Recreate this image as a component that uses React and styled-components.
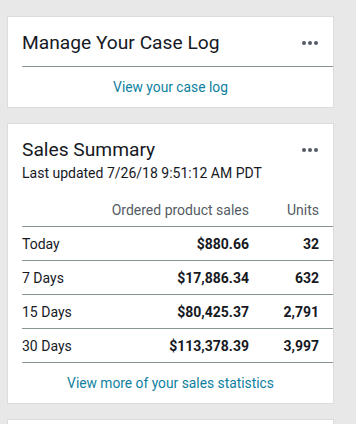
import React from 'react'
import styled, { createGlobalStyle } from 'styled-components'

const GlobalStyle = createGlobalStyle`
  body {
    margin: 0;
    background: #e8e8e8;
    font-family: Roboto, "Open Sans", sans-serif;
    color: #16191f;
  }
`

const Page = styled.div`
  width: 356px;
  height: 424px;
  overflow: hidden;
  padding: 16px 0 0 7px;
  box-sizing: border-box;
  display: flex;
  flex-direction: column;
  gap: 15px;
`

const Card = styled.div`
  width: 327px;
  box-sizing: border-box;
  background: #fff;
  border: 1px solid #dcdcdc;
  padding-left: 14px;
  min-height: ${({ minHeight }) => minHeight || 'auto'};
`

const Header = styled.div`
  display: flex;
  align-items: center;
  justify-content: space-between;
  padding: ${({ pad }) => pad};
  padding-right: 15px;
`

const Title = styled.h2`
  margin: 0;
  font-size: 19.2px;
  line-height: 24px;
  font-weight: 400;
  color: #16191f;
`

const Dots = styled.svg`
  width: 16px;
  height: 4px;
  fill: #545b64;
`

const Sub = styled.div`
  font-size: 14px;
  line-height: 18px;
  color: #16191f;
  margin-top: 2px;
`

const Divider = styled.div`
  border-top: 1px solid #879596;
`

const Footer = styled.div`
  display: flex;
  justify-content: center;
  align-items: center;
  height: 40px;
  padding-right: 14px;
`

const Link = styled.a`
  font-size: 13.8px;
  color: #0f7fa0;
  text-decoration: none;
  cursor: pointer;
`

const Table = styled.div`
  display: grid;
  grid-template-columns: 1fr auto 84px;
  margin-top: 11px;
`

const Cell = styled.div`
  height: 33px;
  display: flex;
  align-items: center;
  justify-content: ${({ left }) => (left ? 'flex-start' : 'flex-end')};
  padding-right: ${({ last }) => (last ? '14px' : '0')};
  font-size: 14px;
  font-weight: ${({ bold }) => (bold ? 700 : 400)};
  color: ${({ head }) => (head ? '#545b64' : '#16191f')};
  border-bottom: 1px solid #879596;
`

const DotsIcon = () => (
  <Dots viewBox="0 0 16 4">
    <circle cx="2" cy="2" r="2" />
    <circle cx="8" cy="2" r="2" />
    <circle cx="14" cy="2" r="2" />
  </Dots>
)

const rows = [
  ['Today', '$880.66', '32'],
  ['7 Days', '$17,886.34', '632'],
  ['15 Days', '$80,425.37', '2,791'],
  ['30 Days', '$113,378.39', '3,997'],
]

export default function App() {
  return (
    <Page>
      <GlobalStyle />
      <Card>
        <Header pad="14px 0 11px">
          <Title>Manage Your Case Log</Title>
          <DotsIcon />
        </Header>
        <Divider />
        <Footer>
          <Link>View your case log</Link>
        </Footer>
      </Card>
      <Card>
        <Header pad="14px 0 0">
          <Title>Sales Summary</Title>
          <DotsIcon />
        </Header>
        <Sub>Last updated 7/26/18 9:51:12 AM PDT</Sub>
        <Table>
          <Cell left head />
          <Cell head>Ordered product sales</Cell>
          <Cell head last>Units</Cell>
          {rows.map(([label, sales, units]) => (
            <React.Fragment key={label}>
              <Cell left>{label}</Cell>
              <Cell bold>{sales}</Cell>
              <Cell bold last>{units}</Cell>
            </React.Fragment>
          ))}
        </Table>
        <Footer>
          <Link>View more of your sales statistics</Link>
        </Footer>
      </Card>
      <Card minHeight="40px" />
    </Page>
  )
}
